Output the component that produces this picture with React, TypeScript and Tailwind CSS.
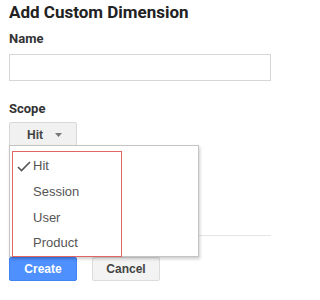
import React from "react";

export default function App() {
  return (
    <div className="relative w-[291px] h-[300px] bg-white font-['Roboto',sans-serif] overflow-hidden">
      <div className="pl-[9px] pt-[1px]">
        <h1 className="text-[17px] leading-[22px] font-bold text-[#222]">Add Custom Dimension</h1>
        <div className="mt-[8px] text-[13px] leading-[16px] font-bold text-[#333]">Name</div>
        <div className="mt-[7px] w-[262px] h-[27px] border border-[#d6d6d6] bg-white" />
        <div className="mt-[20px] text-[13px] leading-[16px] font-bold text-[#333]">Scope</div>
        <div className="mt-[5px] flex items-center w-[68px] h-[25px] border border-[#d8d8d8] rounded-[2px] bg-[#f1f1f1] font-['Liberation_Sans',sans-serif] text-[12px] font-bold text-[#444]">
          <span className="ml-[17px]">Hit</span>
          <svg className="ml-[12px]" width="7" height="4" viewBox="0 0 7 4">
            <path d="M0 0 L7 0 L3.5 4 Z" fill="#777" />
          </svg>
        </div>
        <div className="mt-[88px] w-[262px] h-[1px] bg-[#e5e5e5]" />
        <div className="mt-[21px] flex gap-[15px] font-['Liberation_Sans',sans-serif] text-[12px] font-bold">
          <button className="w-[68px] h-[24px] rounded-[2px] bg-[#4d90fe] border border-[#3f83f4] text-white">Create</button>
          <button className="w-[68px] h-[24px] rounded-[2px] bg-[#f3f3f3] border border-[#dcdcdc] text-[#444]">Cancel</button>
        </div>
      </div>

      <div className="absolute left-[9px] top-[145px] w-[190px] h-[112px] bg-white border border-[#c4c4c4] shadow-[1px_2px_3px_rgba(0,0,0,0.2)]">
        <div className="ml-[2px] mt-[5px] w-[110px] h-[106px] border border-[#e06666] flex flex-col font-['Liberation_Sans',sans-serif] text-[13px] text-[#555]">
          <div className="relative h-[26px] mt-[1px] flex items-center pl-[20px]">
            <svg className="absolute left-[4px] top-[8px]" width="14" height="11" viewBox="0 0 14 11">
              <path d="M1 6 L4.5 9.5 L13 1" fill="none" stroke="#555" strokeWidth="1.6" />
            </svg>
            Hit
          </div>
          <div className="h-[26px] flex items-center pl-[20px]">Session</div>
          <div className="h-[26px] flex items-center pl-[20px]">User</div>
          <div className="h-[26px] flex items-center pl-[20px]">Product</div>
        </div>
      </div>
    </div>
  );
}
